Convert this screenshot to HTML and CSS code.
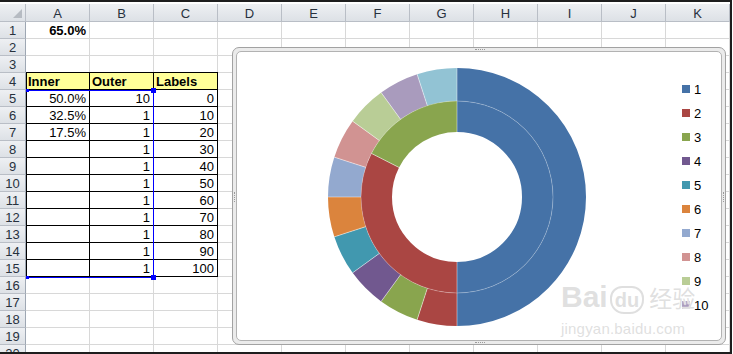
FILE: index.html
```html
<!DOCTYPE html>
<html lang="en">
<head>
    <meta charset="UTF-8">
    <title>Donut gauge sheet</title>
    <link rel="stylesheet" href="styles.css">
</head>
<body>
<div class="window">
    <div class="sheet">
        <div class="corner"></div>
        <div class="col-h">A</div><div class="col-h">B</div><div class="col-h">C</div><div class="col-h">D</div><div class="col-h">E</div><div class="col-h">F</div><div class="col-h">G</div><div class="col-h">H</div><div class="col-h">I</div><div class="col-h">J</div><div class="col-h">K</div>

        <div class="row-h">1</div><div class="c num bold">65.0%</div><div class="c"></div><div class="c"></div><div class="c"></div><div class="c"></div><div class="c"></div><div class="c"></div><div class="c"></div><div class="c"></div><div class="c"></div><div class="c"></div>
        <div class="row-h">2</div><div class="c"></div><div class="c"></div><div class="c"></div><div class="c"></div><div class="c"></div><div class="c"></div><div class="c"></div><div class="c"></div><div class="c"></div><div class="c"></div><div class="c"></div>
        <div class="row-h">3</div><div class="c"></div><div class="c"></div><div class="c"></div><div class="c"></div><div class="c"></div><div class="c"></div><div class="c"></div><div class="c"></div><div class="c"></div><div class="c"></div><div class="c"></div>
        <div class="row-h">4</div><div class="c tb tl hd">Inner</div><div class="c tb hd">Outer</div><div class="c tb hd">Labels</div><div class="c"></div><div class="c"></div><div class="c"></div><div class="c"></div><div class="c"></div><div class="c"></div><div class="c"></div><div class="c"></div>
        <div class="row-h">5</div><div class="c tb tl num">50.0%</div><div class="c tb num">10</div><div class="c tb num">0</div><div class="c"></div><div class="c"></div><div class="c"></div><div class="c"></div><div class="c"></div><div class="c"></div><div class="c"></div><div class="c"></div>
        <div class="row-h">6</div><div class="c tb tl num">32.5%</div><div class="c tb num">1</div><div class="c tb num">10</div><div class="c"></div><div class="c"></div><div class="c"></div><div class="c"></div><div class="c"></div><div class="c"></div><div class="c"></div><div class="c"></div>
        <div class="row-h">7</div><div class="c tb tl num">17.5%</div><div class="c tb num">1</div><div class="c tb num">20</div><div class="c"></div><div class="c"></div><div class="c"></div><div class="c"></div><div class="c"></div><div class="c"></div><div class="c"></div><div class="c"></div>
        <div class="row-h">8</div><div class="c tb tl"></div><div class="c tb num">1</div><div class="c tb num">30</div><div class="c"></div><div class="c"></div><div class="c"></div><div class="c"></div><div class="c"></div><div class="c"></div><div class="c"></div><div class="c"></div>
        <div class="row-h">9</div><div class="c tb tl"></div><div class="c tb num">1</div><div class="c tb num">40</div><div class="c"></div><div class="c"></div><div class="c"></div><div class="c"></div><div class="c"></div><div class="c"></div><div class="c"></div><div class="c"></div>
        <div class="row-h">10</div><div class="c tb tl"></div><div class="c tb num">1</div><div class="c tb num">50</div><div class="c"></div><div class="c"></div><div class="c"></div><div class="c"></div><div class="c"></div><div class="c"></div><div class="c"></div><div class="c"></div>
        <div class="row-h">11</div><div class="c tb tl"></div><div class="c tb num">1</div><div class="c tb num">60</div><div class="c"></div><div class="c"></div><div class="c"></div><div class="c"></div><div class="c"></div><div class="c"></div><div class="c"></div><div class="c"></div>
        <div class="row-h">12</div><div class="c tb tl"></div><div class="c tb num">1</div><div class="c tb num">70</div><div class="c"></div><div class="c"></div><div class="c"></div><div class="c"></div><div class="c"></div><div class="c"></div><div class="c"></div><div class="c"></div>
        <div class="row-h">13</div><div class="c tb tl"></div><div class="c tb num">1</div><div class="c tb num">80</div><div class="c"></div><div class="c"></div><div class="c"></div><div class="c"></div><div class="c"></div><div class="c"></div><div class="c"></div><div class="c"></div>
        <div class="row-h">14</div><div class="c tb tl"></div><div class="c tb num">1</div><div class="c tb num">90</div><div class="c"></div><div class="c"></div><div class="c"></div><div class="c"></div><div class="c"></div><div class="c"></div><div class="c"></div><div class="c"></div>
        <div class="row-h">15</div><div class="c tb tl"></div><div class="c tb num">1</div><div class="c tb num">100</div><div class="c"></div><div class="c"></div><div class="c"></div><div class="c"></div><div class="c"></div><div class="c"></div><div class="c"></div><div class="c"></div>
        <div class="row-h">16</div><div class="c"></div><div class="c"></div><div class="c"></div><div class="c"></div><div class="c"></div><div class="c"></div><div class="c"></div><div class="c"></div><div class="c"></div><div class="c"></div><div class="c"></div>
        <div class="row-h">17</div><div class="c"></div><div class="c"></div><div class="c"></div><div class="c"></div><div class="c"></div><div class="c"></div><div class="c"></div><div class="c"></div><div class="c"></div><div class="c"></div><div class="c"></div>
        <div class="row-h">18</div><div class="c"></div><div class="c"></div><div class="c"></div><div class="c"></div><div class="c"></div><div class="c"></div><div class="c"></div><div class="c"></div><div class="c"></div><div class="c"></div><div class="c"></div>
        <div class="row-h">19</div><div class="c"></div><div class="c"></div><div class="c"></div><div class="c"></div><div class="c"></div><div class="c"></div><div class="c"></div><div class="c"></div><div class="c"></div><div class="c"></div><div class="c"></div>
        <div class="row-h">20</div><div class="c"></div><div class="c"></div><div class="c"></div><div class="c"></div><div class="c"></div><div class="c"></div><div class="c"></div><div class="c"></div><div class="c"></div><div class="c"></div><div class="c"></div>
    </div>

    <!-- source range highlight of the chart -->
    <div class="selection">
        <span class="handle h-tl"></span>
        <span class="handle h-tr"></span>
        <span class="handle h-bl"></span>
        <span class="handle h-br"></span>
    </div>

    <!-- floating chart object -->
    <div class="chart">
        <span class="grip grip-top"></span>
        <span class="grip grip-bottom"></span>
        <span class="grip grip-left"></span>
        <span class="grip grip-right"></span>
        <div class="chart-inner">
            <svg class="donut" width="440" height="288" viewBox="0 0 440 288">
                <g transform="rotate(-90 221 146)" fill="none">
                    <!-- outer ring: 10,1,1,... -->
                    <circle cx="221" cy="146" r="112.5" stroke-width="33" pathLength="360" stroke="#4572a7" stroke-dasharray="180 180"/>
                    <circle cx="221" cy="146" r="112.5" stroke-width="33" pathLength="360" stroke="#aa4643" stroke-dasharray="18 342" stroke-dashoffset="-180"/>
                    <circle cx="221" cy="146" r="112.5" stroke-width="33" pathLength="360" stroke="#89a54e" stroke-dasharray="18 342" stroke-dashoffset="-198"/>
                    <circle cx="221" cy="146" r="112.5" stroke-width="33" pathLength="360" stroke="#71588f" stroke-dasharray="18 342" stroke-dashoffset="-216"/>
                    <circle cx="221" cy="146" r="112.5" stroke-width="33" pathLength="360" stroke="#4198af" stroke-dasharray="18 342" stroke-dashoffset="-234"/>
                    <circle cx="221" cy="146" r="112.5" stroke-width="33" pathLength="360" stroke="#db843d" stroke-dasharray="18 342" stroke-dashoffset="-252"/>
                    <circle cx="221" cy="146" r="112.5" stroke-width="33" pathLength="360" stroke="#93a9cf" stroke-dasharray="18 342" stroke-dashoffset="-270"/>
                    <circle cx="221" cy="146" r="112.5" stroke-width="33" pathLength="360" stroke="#d19392" stroke-dasharray="18 342" stroke-dashoffset="-288"/>
                    <circle cx="221" cy="146" r="112.5" stroke-width="33" pathLength="360" stroke="#b9cd96" stroke-dasharray="18 342" stroke-dashoffset="-306"/>
                    <circle cx="221" cy="146" r="112.5" stroke-width="33" pathLength="360" stroke="#a99bbd" stroke-dasharray="18 342" stroke-dashoffset="-324"/>
                    <circle cx="221" cy="146" r="112.5" stroke-width="33" pathLength="360" stroke="#92c3d4" stroke-dasharray="18 342" stroke-dashoffset="-342"/>
                    <!-- inner ring: 50%, 32.5%, 17.5% -->
                    <circle cx="221" cy="146" r="80.5" stroke-width="31" pathLength="360" stroke="#4572a7" stroke-dasharray="180 180"/>
                    <circle cx="221" cy="146" r="80.5" stroke-width="31" pathLength="360" stroke="#aa4643" stroke-dasharray="117 243" stroke-dashoffset="-180"/>
                    <circle cx="221" cy="146" r="80.5" stroke-width="31" pathLength="360" stroke="#89a54e" stroke-dasharray="63 297" stroke-dashoffset="-297"/>
                    <!-- slice edges -->
                    <g class="edge">
                        <circle class="ring-edge" cx="221" cy="146" r="96"/>
                        <line x1="317" y1="146" x2="350" y2="146"/>
                        <line x1="317" y1="146" x2="350" y2="146" transform="rotate(180 221 146)"/>
                        <line x1="317" y1="146" x2="350" y2="146" transform="rotate(198 221 146)"/>
                        <line x1="317" y1="146" x2="350" y2="146" transform="rotate(216 221 146)"/>
                        <line x1="317" y1="146" x2="350" y2="146" transform="rotate(234 221 146)"/>
                        <line x1="317" y1="146" x2="350" y2="146" transform="rotate(252 221 146)"/>
                        <line x1="317" y1="146" x2="350" y2="146" transform="rotate(270 221 146)"/>
                        <line x1="317" y1="146" x2="350" y2="146" transform="rotate(288 221 146)"/>
                        <line x1="317" y1="146" x2="350" y2="146" transform="rotate(306 221 146)"/>
                        <line x1="317" y1="146" x2="350" y2="146" transform="rotate(324 221 146)"/>
                        <line x1="317" y1="146" x2="350" y2="146" transform="rotate(342 221 146)"/>
                        <line x1="285" y1="146" x2="317" y2="146"/>
                        <line x1="285" y1="146" x2="317" y2="146" transform="rotate(180 221 146)"/>
                        <line x1="285" y1="146" x2="317" y2="146" transform="rotate(297 221 146)"/>
                    </g>
                </g>
            </svg>
            <ul class="legend">
                <li><i class="key k1"></i>1</li>
                <li><i class="key k2"></i>2</li>
                <li><i class="key k3"></i>3</li>
                <li><i class="key k4"></i>4</li>
                <li><i class="key k5"></i>5</li>
                <li><i class="key k6"></i>6</li>
                <li><i class="key k7"></i>7</li>
                <li><i class="key k8"></i>8</li>
                <li><i class="key k9"></i>9</li>
                <li><i class="key k10"></i>10</li>
            </ul>
        </div>
    </div>

    <!-- screenshot watermark -->
    <div class="watermark">
        <div class="wm-big"><span>Bai</span><span class="paw">du</span><span class="wm-cn">经验</span></div>
        <div class="wm-small">jingyan.baidu.com</div>
    </div>
</div>
</body>
</html>
```

FILE: styles.css
```css
html, body {
    margin: 0;
    padding: 0;
    background: #fff;
    overflow: hidden;
}
.window {
    position: relative;
    width: 732px;
    height: 354px;
    box-sizing: border-box;
    padding-top: 2px;
    border-top: 2px solid #1e1e1e;
    border-right: 2px solid #1e1e1e;
    border-bottom: 2px solid #1e1e1e;
    overflow: hidden;
    font-family: "Liberation Sans", Arial, sans-serif;
}
.sheet {
    display: grid;
    grid-template-columns: 26px repeat(11, 64px);
    grid-template-rows: 18px;
    grid-auto-rows: 17px;
}
.corner, .col-h, .row-h {
    background: linear-gradient(#eef0f3, #dde1e6);
    border-right: 1px solid #b9bec6;
    border-bottom: 1px solid #b9bec6;
    box-sizing: border-box;
    color: #27313d;
    font-size: 13px;
    line-height: 19px;
    text-align: center;
    overflow: hidden;
}
.row-h {
    line-height: 18px;
    border-right-color: #9ea7b3;
}
.corner {
    position: relative;
}
.corner::after {
    content: "";
    position: absolute;
    right: 3px;
    bottom: 3px;
    border-left: 9px solid transparent;
    border-bottom: 9px solid #b6bbc2;
}
.c {
    border-right: 1px solid #d8d8d8;
    border-bottom: 1px solid #d8d8d8;
    box-sizing: border-box;
    padding: 0 3px 0 2px;
    font-size: 13px;
    line-height: 18px;
    color: #000;
    white-space: nowrap;
    overflow: hidden;
}
.num {
    text-align: right;
}
.bold {
    font-weight: bold;
}
.c.tb {
    border-right-color: #000;
    border-bottom-color: #000;
}
.c.tl {
    box-shadow: inset 1px 0 #000;
}
.c.hd {
    background: #ffff99;
    font-weight: bold;
    box-shadow: 0 -1px #000;
}
.c.hd.tl {
    box-shadow: inset 1px 0 #000, 0 -1px #000;
}

/* chart data range outline */
.selection {
    position: absolute;
    left: 26px;
    top: 88px;
    width: 127px;
    height: 186px;
    border-top: 1px solid #0000ff;
    border-right: 1px solid #0000ff;
    border-bottom: 1px solid #0000ff;
}
.handle {
    position: absolute;
    background: #0000ff;
    width: 3px;
    height: 3px;
}
.h-tl { left: 0; top: -2px; }
.h-bl { left: 0; bottom: -2px; }
.h-tr { right: -3px; top: -3px; width: 5px; height: 5px; }
.h-br { right: -3px; bottom: -3px; width: 5px; height: 5px; }

/* chart object */
.chart {
    position: absolute;
    left: 232px;
    top: 45px;
    width: 494px;
    height: 298px;
    box-sizing: border-box;
    padding: 3px;
    border: 1px solid #a2a2a2;
    border-radius: 7px;
    background: #ebebeb;
}
.chart-inner {
    display: flex;
    height: 100%;
    box-sizing: border-box;
    border: 1px solid #b2b2b2;
    border-radius: 5px;
    background: #fff;
}
.donut {
    display: block;
    flex: none;
    margin: -1px 0 0 -1px;
}
.edge circle, .edge line {
    fill: none;
    stroke: #fff;
    stroke-width: 0.8;
    stroke-opacity: 0.55;
}
.edge .ring-edge {
    stroke-opacity: 0.3;
}
.grip {
    position: absolute;
    border-color: #9a9a9a;
    border-style: dotted;
    border-width: 0;
}
.grip-top { top: 1px; left: 242px; width: 10px; border-top-width: 1px; }
.grip-bottom { bottom: 1px; left: 242px; width: 10px; border-bottom-width: 1px; }
.grip-left { left: 1px; top: 144px; height: 10px; border-left-width: 1px; }
.grip-right { right: 1px; top: 144px; height: 10px; border-right-width: 1px; }

.legend {
    list-style: none;
    margin: 0;
    padding: 25px 0 0 6px;
}
.legend li {
    display: flex;
    align-items: center;
    gap: 4px;
    height: 24px;
    font-size: 13px;
    color: #000;
}
.key {
    display: block;
    width: 8px;
    height: 8px;
}
.k1 { background: #4572a7; }
.k2 { background: #aa4643; }
.k3 { background: #89a54e; }
.k4 { background: #71588f; }
.k5 { background: #4198af; }
.k6 { background: #db843d; }
.k7 { background: #93a9cf; }
.k8 { background: #d19392; }
.k9 { background: #b9cd96; }
.k10 { background: #a99bbd; }

/* faint watermark over the corner */
.watermark {
    position: absolute;
    left: 561px;
    top: 278px;
    color: rgba(210, 210, 210, 0.7);
    text-shadow: 0 0 1px #fff, 0 0 1px #fff;
    pointer-events: none;
}
.wm-big {
    display: flex;
    align-items: flex-end;
    gap: 2px;
    font-size: 30px;
    line-height: 34px;
    font-weight: bold;
}
.paw {
    font-size: 20px;
    line-height: 24px;
    padding: 0 3px;
    border: 2px solid rgba(210, 210, 210, 0.7);
    border-radius: 12px 12px 14px 14px;
}
.wm-cn {
    font-family: "Noto Sans CJK SC", sans-serif;
    font-size: 23px;
    font-weight: normal;
    margin-left: 3px;
}
.wm-small {
    margin-top: 6px;
    font-size: 15px;
    letter-spacing: 0.2px;
}
```
